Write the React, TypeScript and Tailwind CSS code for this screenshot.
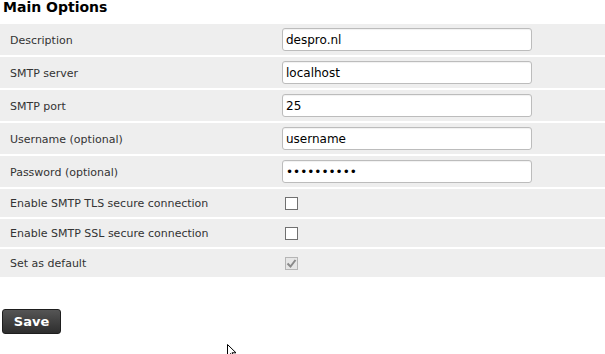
import React from 'react';

const font = { fontFamily: '"DejaVu Sans", Verdana, sans-serif' };

function TextRow({ label, value, type = 'text' }: { label: string; value: string; type?: string }) {
  return (
    <div className="flex h-[31px] items-center bg-[#eeeeee]">
      <div className="w-[282px] pl-[10px] pt-[3px] text-[11px] text-[#333333]">{label}</div>
      <input
        type={type}
        defaultValue={value}
        readOnly
        className="h-[23px] w-[250px] rounded-[3px] border border-[#bcbcbc] bg-white px-[3px] text-[12px] text-black outline-none shadow-[inset_0_1px_1px_rgba(0,0,0,0.06)]"
        style={font}
      />
    </div>
  );
}

function CheckRow({ label, checked = false, disabled = false }: { label: string; checked?: boolean; disabled?: boolean }) {
  return (
    <div className="flex h-[28px] items-center bg-[#eeeeee]">
      <div className="w-[282px] pl-[10px] pt-[2px] text-[11px] text-[#333333]">{label}</div>
      <div
        className={
          disabled
            ? 'ml-[3px] flex h-[13px] w-[13px] items-center justify-center border border-[#b5b5b5] bg-[#e6e6e6]'
            : 'ml-[3px] h-[13px] w-[13px] border border-[#707070] bg-white'
        }
      >
        {checked && (
          <svg width="11" height="11" viewBox="0 0 11 11">
            <path d="M1.5 5.5l3 3 5-6.5" fill="none" stroke="#8a8a8a" strokeWidth={2} />
          </svg>
        )}
      </div>
    </div>
  );
}

export default function App() {
  return (
    <div className="relative h-[354px] w-[605px] overflow-hidden bg-white" style={font}>
      <h2 className="h-[24px] pl-[3px] text-[14px] font-bold leading-[15px] text-black">Main Options</h2>

      {/* Options table */}
      <div className="flex flex-col gap-[2px]">
        <TextRow label="Description" value="despro.nl" />
        <TextRow label="SMTP server" value="localhost" />
        <TextRow label="SMTP port" value="25" />
        <TextRow label="Username (optional)" value="username" />
        <TextRow label="Password (optional)" value="••••••••••" />
        <CheckRow label="Enable SMTP TLS secure connection" />
        <CheckRow label="Enable SMTP SSL secure connection" />
        <CheckRow label="Set as default" checked disabled />
      </div>

      <div className="mt-[32px] pl-[2px]">
        <button className="h-[25px] w-[59px] rounded-[3px] border border-[#1e1e1e] bg-gradient-to-b from-[#555555] to-[#2e2e2e] text-[13px] font-bold text-white">
          Save
        </button>
      </div>

      {/* mouse cursor */}
      <svg className="absolute left-[227px] top-[344px]" width="10" height="14" viewBox="0 0 10 14">
        <path d="M0.5 0.5v12l3-3 2 4 1.5-0.7-2-4h4z" fill="white" stroke="black" strokeWidth={1} />
      </svg>
    </div>
  );
}
